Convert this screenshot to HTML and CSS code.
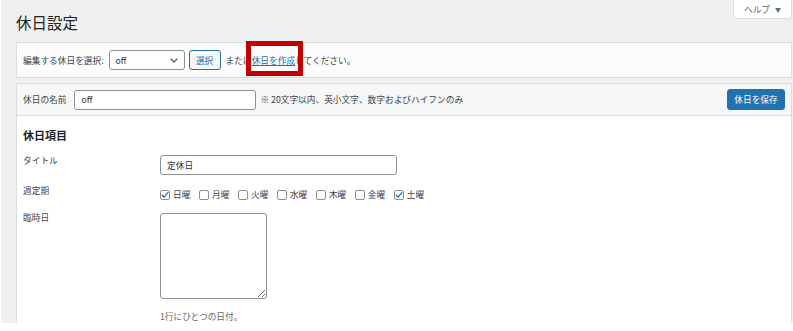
FILE: index.html
```html
<!DOCTYPE html>
<html lang="ja">

<head>
    <meta charset="UTF-8">
    <meta name="viewport" content="width=device-width, initial-scale=1.0">
    <title>休日設定</title>
    <link rel="stylesheet" href="styles.css">
</head>

<body>
    <div class="wrap">
        <div class="page-head">
            <h1>休日設定</h1>
            <button class="help-tab">ヘルプ<span class="caret">▼</span></button>
        </div>

        <div class="manage-box">
            <span class="pick-label">編集する休日を選択:</span>
            <div class="fake-select">
                <span>off</span>
                <svg width="8" height="5" viewBox="0 0 8 5" fill="none" stroke="#50575e" stroke-width="1.2"
                    stroke-linecap="round" stroke-linejoin="round">
                    <path d="M1 1l3 3 3-3" />
                </svg>
            </div>
            <button class="pick-button">選択</button>
            <span class="pick-text">または<a href="#" class="create-link">休日を作成</a>してください。</span>
            <div class="mark-box"></div>
        </div>

        <div class="edit-box">
            <div class="edit-head">
                <label for="holiday-name" class="name-label">休日の名前</label>
                <input type="text" id="holiday-name" class="name-input" value="off">
                <span class="name-note">※ 20文字以内、英小文字、数字およびハイフンのみ</span>
                <button class="save-button">休日を保存</button>
            </div>
            <div class="edit-body">
                <h2>休日項目</h2>
                <div class="field-row row-title">
                    <div class="field-label">タイトル</div>
                    <div class="field">
                        <input type="text" class="title-input" value="定休日">
                    </div>
                </div>
                <div class="field-row row-week">
                    <div class="field-label">週定期</div>
                    <div class="field week-days">
                        <span class="day"><span class="box checked"><svg width="8" height="8" viewBox="0 0 8 8"
                                    fill="none" stroke="#2271b1" stroke-width="1.3" stroke-linecap="round"
                                    stroke-linejoin="round">
                                    <path d="M1.2 4.2l1.9 2 3.8-4.6" />
                                </svg></span>日曜</span>
                        <span class="day"><span class="box"></span>月曜</span>
                        <span class="day"><span class="box"></span>火曜</span>
                        <span class="day"><span class="box"></span>水曜</span>
                        <span class="day"><span class="box"></span>木曜</span>
                        <span class="day"><span class="box"></span>金曜</span>
                        <span class="day"><span class="box checked"><svg width="8" height="8" viewBox="0 0 8 8"
                                    fill="none" stroke="#2271b1" stroke-width="1.3" stroke-linecap="round"
                                    stroke-linejoin="round">
                                    <path d="M1.2 4.2l1.9 2 3.8-4.6" />
                                </svg></span>土曜</span>
                    </div>
                </div>
                <div class="field-row row-extra">
                    <div class="field-label">臨時日</div>
                    <div class="field">
                        <textarea class="extra-dates"></textarea>
                        <p class="description">1行にひとつの日付。</p>
                    </div>
                </div>
            </div>
        </div>
    </div>
</body>

</html>
```

FILE: styles.css
```css
* {
    margin: 0;
    padding: 0;
    box-sizing: border-box;
    font-family: "Noto Sans CJK JP", "Noto Sans", sans-serif;
}

body {
    background-color: #ffffff;
    color: #3c434a;
    font-size: 8.7px;
}

.wrap {
    margin-left: 1px;
    width: 792px;
    height: 323px;
    background-color: #f0f0f1;
    padding: 0 1px 0 15px;
    overflow: hidden;
}

.page-head {
    display: flex;
    justify-content: space-between;
    align-items: flex-start;
    height: 42px;
}

h1 {
    font-size: 15.5px;
    font-weight: 400;
    line-height: 20px;
    padding-top: 12px;
    color: #1d2327;
}

.help-tab {
    width: 59px;
    height: 19px;
    background-color: #ffffff;
    border: 1px solid #dcdcde;
    border-top: none;
    border-radius: 0 0 3px 3px;
    color: #646970;
    font-size: 8.7px;
}

.help-tab .caret {
    font-size: 6px;
    margin-left: 5px;
    vertical-align: 1px;
}

.manage-box {
    position: relative;
    display: flex;
    align-items: center;
    height: 36px;
    padding: 0 6px;
    background-color: #fcfcfc;
    border: 1px solid #dcdcde;
}

.pick-label {
    margin-right: 5px;
}

.fake-select {
    display: flex;
    justify-content: space-between;
    align-items: center;
    width: 76px;
    height: 20px;
    padding: 0 6px;
    background-color: #ffffff;
    border: 1px solid #8c8f94;
    border-radius: 3px;
    color: #2c3338;
}

.pick-button {
    width: 32px;
    height: 20px;
    margin-left: 4px;
    background-color: #f6f7f7;
    border: 1px solid #2271b1;
    border-radius: 3px;
    color: #2271b1;
    font-size: 8.7px;
}

.pick-text {
    margin-left: 5px;
}

.create-link {
    color: #2271b1;
}

.mark-box {
    position: absolute;
    left: 229px;
    top: -2px;
    width: 57px;
    height: 35px;
    border: 5px solid #c00000;
}

.edit-box {
    margin-top: 5px;
    height: 260px;
    background-color: #ffffff;
    border: 1px solid #dcdcde;
}

.edit-head {
    display: flex;
    align-items: center;
    height: 32px;
    padding: 0 6px;
    background-color: #f6f7f7;
    border-bottom: 1px solid #dcdcde;
}

.name-label {
    margin-right: 8px;
}

.name-input {
    width: 182px;
    height: 20px;
    padding: 0 6px;
    border: 1px solid #8c8f94;
    border-radius: 3px;
    font-size: 8.7px;
    color: #2c3338;
}

.name-note {
    margin-left: 4px;
}

.save-button {
    margin-left: auto;
    width: 58px;
    height: 21px;
    background-color: #2271b1;
    border: 1px solid #2271b1;
    border-radius: 3px;
    color: #ffffff;
    font-size: 8.7px;
}

.edit-body {
    padding: 12px 6px 0;
}

h2 {
    font-size: 11px;
    font-weight: 700;
    line-height: 14px;
    color: #1d2327;
}

.field-row {
    display: grid;
    grid-template-columns: 137px 1fr;
}

.field-label {
    line-height: 12px;
}

.row-title {
    margin-top: 13px;
}

.title-input {
    width: 237px;
    height: 20px;
    padding: 0 6px;
    border: 1px solid #8c8f94;
    border-radius: 3px;
    font-size: 8.7px;
    color: #2c3338;
}

.row-week {
    margin-top: 10px;
}

.week-days {
    display: flex;
    gap: 8.6px;
    padding-top: 4px;
    line-height: 12px;
}

.day {
    display: flex;
    align-items: center;
}

.box {
    display: flex;
    align-items: center;
    justify-content: center;
    width: 10px;
    height: 10px;
    margin-right: 3px;
    border: 1px solid #8c8f94;
    border-radius: 2px;
    background-color: #ffffff;
}

.row-extra {
    margin-top: 11px;
}

.extra-dates {
    display: block;
    width: 107px;
    height: 86px;
    margin-top: 1px;
    border: 1px solid #8c8f94;
    border-radius: 3px;
}

.description {
    margin-top: 12px;
    line-height: 12px;
    color: #646970;
}
```
